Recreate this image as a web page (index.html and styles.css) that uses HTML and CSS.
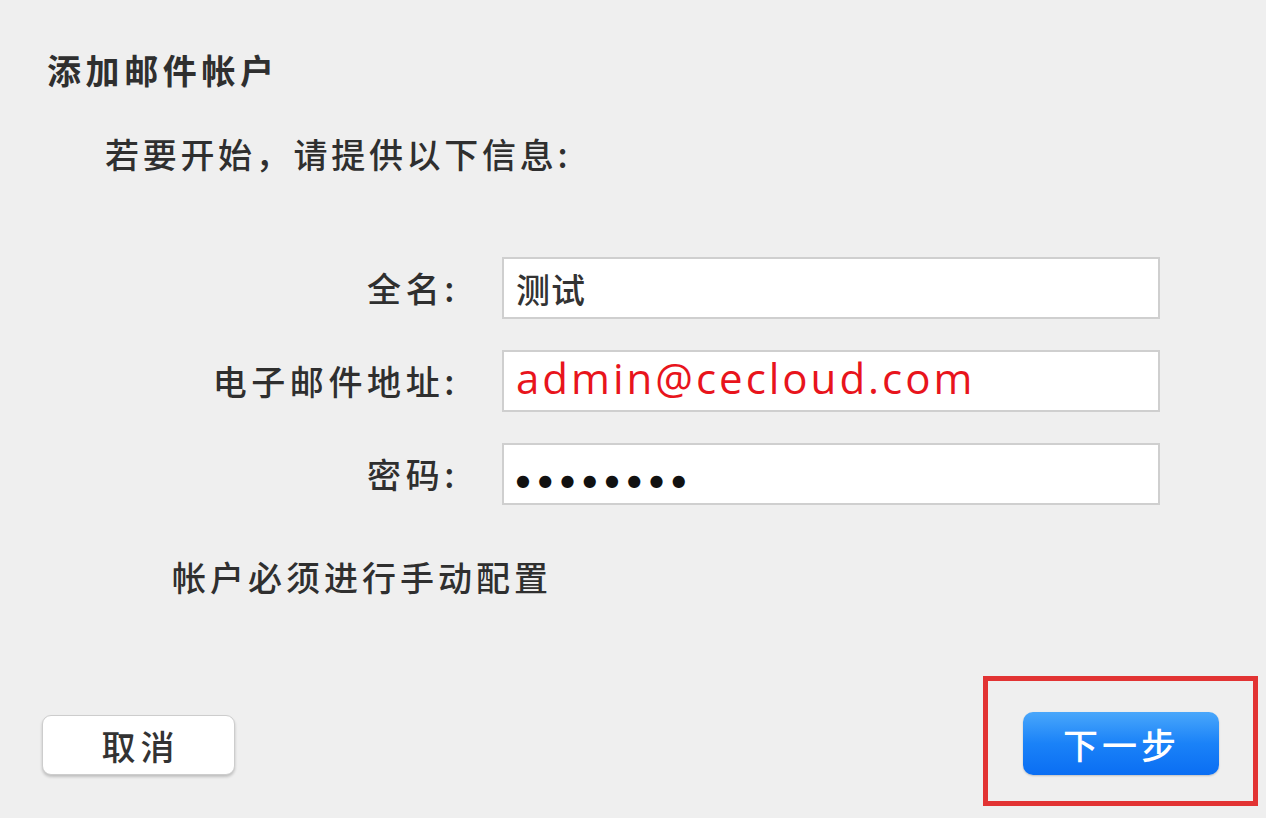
FILE: index.html
```html
<!DOCTYPE html>
<html lang="zh-CN">
<head>
<meta charset="utf-8">
<title>添加邮件帐户</title>
<link rel="stylesheet" href="styles.css">
</head>
<body>
<div class="dialog">
  <h1 class="title">添加邮件帐户</h1>
  <p class="intro">若要开始，请提供以下信息:</p>
  <div class="form">
    <label class="label">全名:</label>
    <div class="field"><span class="value">测试</span></div>
    <label class="label">电子邮件地址:</label>
    <div class="field"><span class="email">admin@cecloud.com</span></div>
    <label class="label">密码:</label>
    <div class="field"><span class="dots">●●●●●●●●</span></div>
  </div>
  <p class="note">帐户必须进行手动配置</p>
  <div class="actions">
    <button class="btn btn-cancel">取消</button>
    <div class="highlight">
      <button class="btn btn-next">下一步</button>
    </div>
  </div>
</div>
</body>
</html>
```
FILE: styles.css
```css
html, body {
  margin: 0;
  padding: 0;
  background: #efefef;
  width: 1266px;
  height: 818px;
  overflow: hidden;
}
.dialog {
  font-family: "Noto Sans CJK SC", "Noto Sans", sans-serif;
  color: #2f2f2f;
  display: flex;
  flex-direction: column;
  height: 818px;
  box-sizing: border-box;
  padding: 48px 0 0 47px;
}
.title {
  margin: 0;
  font-size: 34px;
  line-height: 44px;
  font-weight: 700;
  letter-spacing: 4.6px;
}
.intro {
  margin: 40px 0 0 58px;
  font-size: 34px;
  line-height: 44px;
  font-weight: 500;
  letter-spacing: 3.7px;
}
.form {
  display: grid;
  grid-template-columns: 408px 658px;
  column-gap: 47px;
  row-gap: 31px;
  margin-top: 81px;
  align-items: center;
}
.label {
  text-align: right;
  font-size: 34px;
  font-weight: 500;
  letter-spacing: 4.6px;
  margin-right: -4px;
  line-height: 44px;
}
.field {
  height: 62px;
  box-sizing: border-box;
  background: #fff;
  border: 2px solid #cfcfcf;
  display: flex;
  align-items: center;
  padding-left: 12px;
}
.value {
  font-size: 34px;
  font-weight: 500;
  color: #333;
  letter-spacing: 1px;
}
.email {
  font-family: "Open Sans", "Liberation Sans", sans-serif;
  color: #e8141c;
  font-size: 42px;
  letter-spacing: 3px;
  line-height: 1;
  margin-top: -6px;
}
.dots {
  font-family: "DejaVu Sans", sans-serif;
  font-size: 16px;
  letter-spacing: 8.3px;
  color: #111;
  padding-top: 12px;
}
.note {
  margin: 50px 0 0 125px;
  font-size: 34px;
  font-weight: 500;
  letter-spacing: 4px;
  line-height: 44px;
}
.actions {
  margin-top: auto;
  display: flex;
  justify-content: space-between;
  align-items: flex-end;
  padding: 0 8px 12px 0;
  margin-left: -5px;
}
.btn {
  font-family: "Noto Sans CJK SC", sans-serif;
  font-size: 34px;
  font-weight: 500;
  border-radius: 9px;
  cursor: pointer;
}
.btn-cancel {
  width: 193px;
  height: 60px;
  background: #fff;
  color: #333;
  border: 1px solid #cdcdcd;
  box-shadow: 0 2px 3px rgba(0,0,0,0.2);
  margin-bottom: 31px;
  letter-spacing: 5px;
  padding-left: 10px;
}
.highlight {
  border: 5px solid #e23333;
  width: 275px;
  height: 130px;
  box-sizing: border-box;
  display: flex;
  align-items: center;
  justify-content: center;
}
.btn-next {
  width: 196px;
  height: 63px;
  color: #fff;
  border: none;
  background: linear-gradient(#49a7fb, #1a82f8 50%, #0a6ef3);
  box-shadow: 0 1px 2px rgba(0,0,0,0.2);
  border-radius: 10px;
  margin-top: 4px;
  letter-spacing: 4px;
  padding-left: 8px;
  font-size: 35px;
}
```
